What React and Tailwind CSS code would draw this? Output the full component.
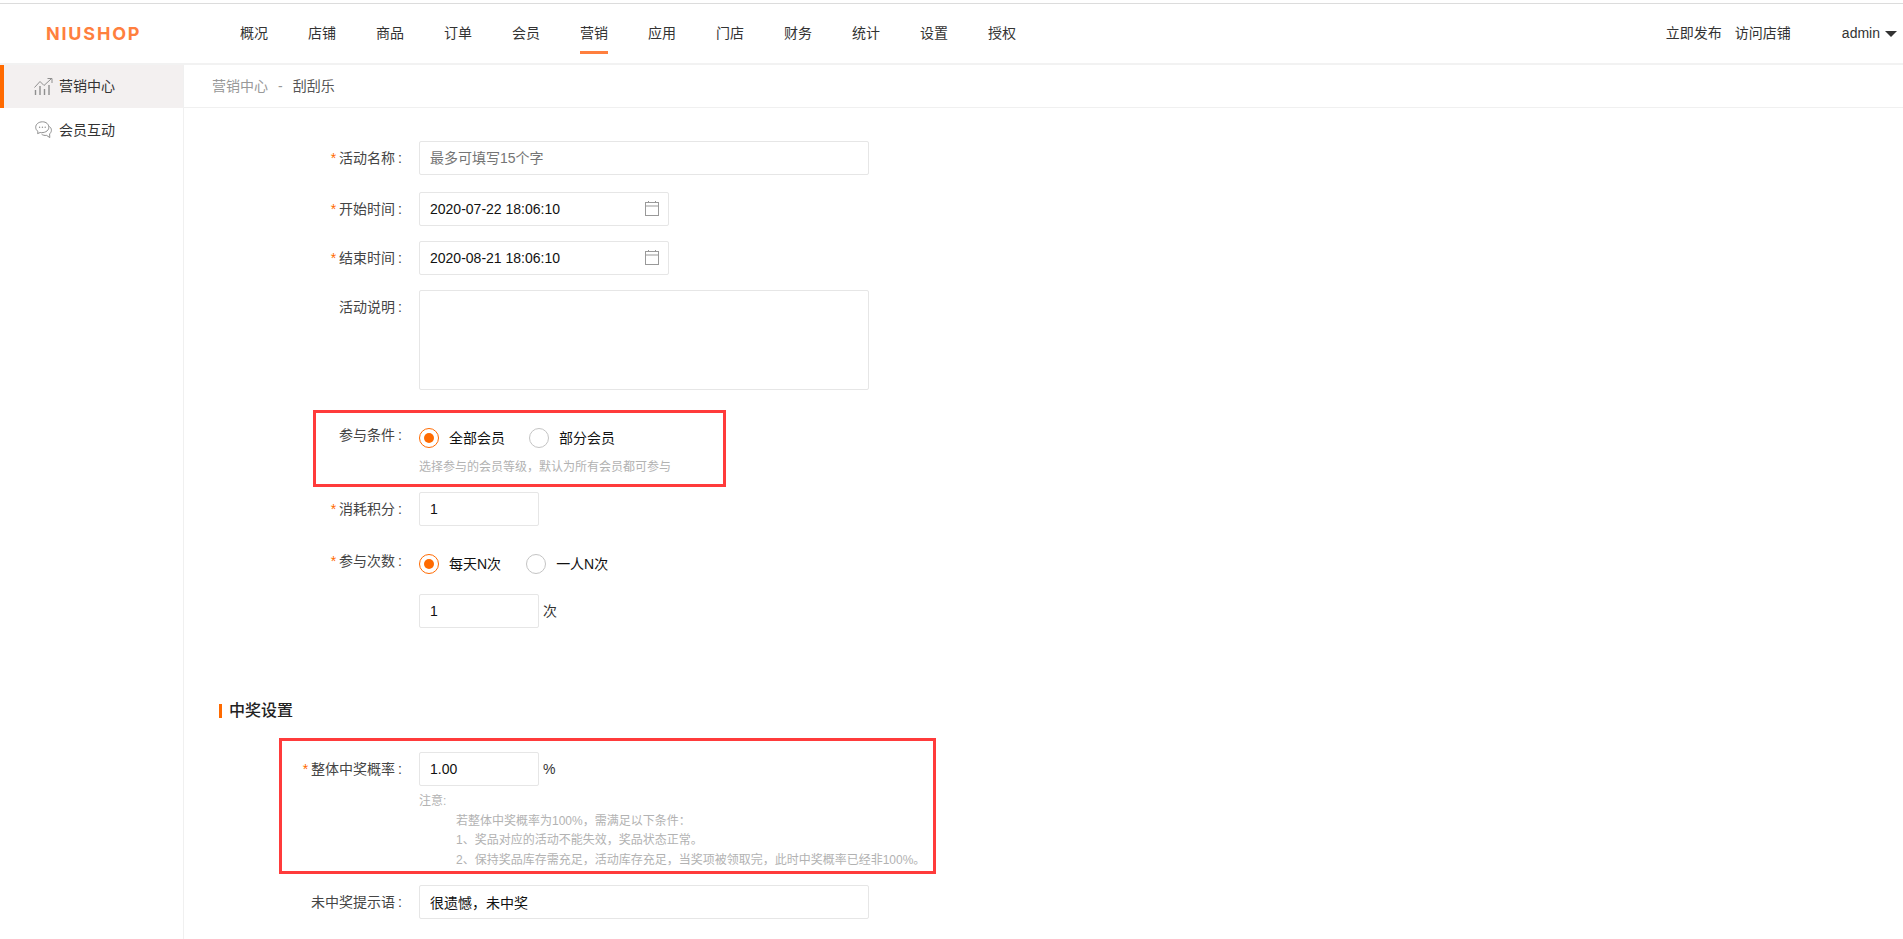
const nav = ['概况','店铺','商品','订单','会员','营销','应用','门店','财务','统计','设置','授权'];

function ChartIcon() {
  return (
    <svg width="19" height="17" viewBox="0 0 19 17" fill="none" stroke="#8f8f8f" strokeWidth="1">
      <path d="M0.5 9.5 L6 3.5 L10 7.5 L17 1" />
      <path d="M13.5 0.5 H18 V5" />
      <path d="M1.5 12 V17 M6 8 V17 M10.5 11 V17 M15 7 V17" strokeWidth="1.4" />
    </svg>
  );
}

function ChatIcon() {
  return (
    <svg width="17" height="18" viewBox="0 0 17 18" fill="none" stroke="#8f8f8f" strokeWidth="1">
      <path d="M7.5 0.8 C3.6 0.8 0.7 3.2 0.7 6.3 C0.7 8 1.6 9.5 3 10.5 L2.6 12.6 L5.2 11.5 C8.8 12.2 13.8 10.4 13.8 6.3 C13.8 3.2 11.2 0.8 7.5 0.8 Z" />
      <path d="M14.4 5.5 C15.8 6.5 16.4 7.8 16.4 9.3 C16.4 10.8 15.6 12 14.6 12.9 L14.8 16.6 L11.6 14.4 C9.6 14.6 7.8 14.2 6.6 13.2" />
      <circle cx="4.6" cy="6.3" r="0.7" fill="#8f8f8f" stroke="none" />
      <circle cx="7.4" cy="6.3" r="0.7" fill="#8f8f8f" stroke="none" />
      <circle cx="10.2" cy="6.3" r="0.7" fill="#8f8f8f" stroke="none" />
    </svg>
  );
}

function CalendarIcon() {
  return (
    <svg width="14" height="15" viewBox="0 0 14 15" fill="none" stroke="#999999" strokeWidth="1" className="absolute right-[10px] top-[9px]">
      <rect x="0.5" y="1.5" width="13" height="13" />
      <path d="M0.5 5 H13.5" />
      <path d="M3.5 0 V2 M10.5 0 V2" />
    </svg>
  );
}

function Label({ text, req, className = '' }) {
  return (
    <div className={`w-[218px] shrink-0 mr-[17px] text-right text-[14px] leading-[34px] text-[#454545] ${className}`}>
      {req && <span className="text-[#ff6a00] mr-[3px]">*</span>}
      {text}<span className="pl-[3px]">:</span>
    </div>
  );
}

function Field({ value, placeholder, width }) {
  return (
    <input
      readOnly
      value={value || ''}
      placeholder={placeholder}
      className={`${width} h-[34px] border border-[#e6e6e6] rounded-[2px] pl-[10px] text-[14px] text-[#111] placeholder:text-[#757575] outline-none bg-white`}
    />
  );
}

function Radio({ label, checked, className = '' }) {
  return (
    <div className={`flex items-center ${className}`}>
      <span className={`w-[20px] h-[20px] rounded-full border-[1.5px] flex items-center justify-center bg-white ${checked ? 'border-[#ff6a00]' : 'border-[#c4c4c4]'}`}>
        {checked && <span className="w-[10px] h-[10px] rounded-full bg-[#ff6a00]" />}
      </span>
      <span className="ml-[10px] text-[14px] text-[#111]">{label}</span>
    </div>
  );
}

export default function App() {
  return (
    <div
      className="h-[939px] overflow-hidden bg-white text-[14px] text-[#333]"
      style={{ fontFamily: '"Liberation Sans", "Noto Sans CJK SC", sans-serif' }}
    >
      <div className="h-[3px]" />
      <div className="h-px bg-[#dcdcdc]" />
      <header className="relative h-[61px] flex items-center border-b-2 border-[#f2f2f2]">
        <div className="w-[240px] shrink-0 pl-[46px] text-[18px] leading-none font-bold tracking-[1.8px] text-[#ff7f3e]" style={{ fontFamily: 'Inter, sans-serif' }}>NIUSHOP</div>
        <nav className="flex h-full">
          {nav.map((n) => (
            <div key={n} className="relative w-[68px] h-full flex items-center text-[#333]">
              <span className="w-[28px]">{n}</span>
              {n === '营销' && <span className="absolute left-0 top-[47px] w-[28px] h-[3px] bg-[#ff7f3e]" />}
            </div>
          ))}
        </nav>
        <div className="ml-auto flex items-center pr-[6px] text-[#333]">
          <span>立即发布</span>
          <span className="ml-[13px]">访问店铺</span>
          <span className="ml-[51px]">admin</span>
          <span className="ml-[5px] w-0 h-0 border-x-[6px] border-x-transparent border-t-[6px] border-t-[#333]" />
        </div>
      </header>

      <div className="flex h-[874px]">
        <aside className="w-[184px] shrink-0 border-r border-[#f0f0f0]">
          <div className="h-[43px] flex items-center bg-[#f3f0f0] border-l-4 border-[#ff6a00] pl-[30px]">
            <ChartIcon />
            <span className="ml-[6px] text-[#333]">营销中心</span>
          </div>
          <div className="h-[44px] flex items-center pl-[35px]">
            <ChatIcon />
            <span className="ml-[7px] text-[#333]">会员互动</span>
          </div>
        </aside>

        <main className="flex-1 min-w-0">
          <div className="h-[43px] flex items-center pl-[28px] border-b border-[#f0f0f0]">
            <span className="text-[#999]">营销中心</span>
            <span className="mx-[10px] text-[#999]">-</span>
            <span className="text-[#555]">刮刮乐</span>
          </div>

          <div className="pt-[33px]">
            <div className="flex mb-[17px]">
              <Label text="活动名称" req />
              <Field placeholder="最多可填写15个字" width="w-[450px]" />
            </div>
            <div className="flex mb-[15px]">
              <Label text="开始时间" req />
              <div className="relative w-[250px]">
                <Field value="2020-07-22 18:06:10" width="w-[250px]" />
                <CalendarIcon />
              </div>
            </div>
            <div className="flex mb-[15px]">
              <Label text="结束时间" req />
              <div className="relative w-[250px]">
                <Field value="2020-08-21 18:06:10" width="w-[250px]" />
                <CalendarIcon />
              </div>
            </div>
            <div className="flex mb-[31px]">
              <Label text="活动说明" />
              <div className="w-[450px] h-[100px] border border-[#e6e6e6] rounded-[2px]" />
            </div>

            <div className="relative mb-[16px]">
              <div className="absolute left-[129px] top-[-11px] w-[413px] h-[77px] border-[3px] border-[#ff3b3b]" />
              <div className="flex">
                <Label text="参与条件" className="-mt-[3px]" />
                <div className="flex h-[34px] items-center">
                  <Radio label="全部会员" checked className="mr-[24px]" />
                  <Radio label="部分会员" />
                </div>
              </div>
              <div className="ml-[235px] mt-[3px] text-[12px] leading-[18px] text-[#b2b2b2]">选择参与的会员等级，默认为所有会员都可参与</div>
            </div>

            <div className="flex mb-[21px]">
              <Label text="消耗积分" req />
              <Field value="1" width="w-[120px]" />
            </div>

            <div className="flex mb-[13px]">
              <Label text="参与次数" req className="-mt-[3px]" />
              <div className="flex h-[34px] items-center">
                <Radio label="每天N次" checked className="mr-[25px]" />
                <Radio label="一人N次" />
              </div>
            </div>
            <div className="flex items-center ml-[235px] mb-[75px]">
              <Field value="1" width="w-[120px]" />
              <span className="ml-[4px]">次</span>
            </div>

            <div className="ml-[35px] flex items-center h-[16px] mb-[33px]">
              <span className="w-[3px] h-[14px] bg-[#ff6a00]" />
              <span className="ml-[7px] text-[16px] font-medium text-[#222]">中奖设置</span>
            </div>

            <div className="relative mb-[15px]">
              <div className="absolute left-[95px] top-[-14px] w-[657px] h-[136px] border-[3px] border-[#ff3b3b]" />
              <div className="flex">
                <Label text="整体中奖概率" req />
                <Field value="1.00" width="w-[120px]" />
                <span className="ml-[4px] leading-[34px] text-[#333]">%</span>
              </div>
              <div className="ml-[235px] mt-[6px] text-[12px] leading-[19.5px] text-[#b2b2b2]">
                <div>注意:</div>
                <div className="pl-[37px]">
                  <div>若整体中奖概率为100%，需满足以下条件：</div>
                  <div>1、奖品对应的活动不能失效，奖品状态正常。</div>
                  <div>2、保持奖品库存需充足，活动库存充足，当奖项被领取完，此时中奖概率已经非100%。</div>
                </div>
              </div>
            </div>

            <div className="flex">
              <Label text="未中奖提示语" />
              <Field value="很遗憾，未中奖" width="w-[450px]" />
            </div>
          </div>
        </main>
      </div>
    </div>
  );
}
